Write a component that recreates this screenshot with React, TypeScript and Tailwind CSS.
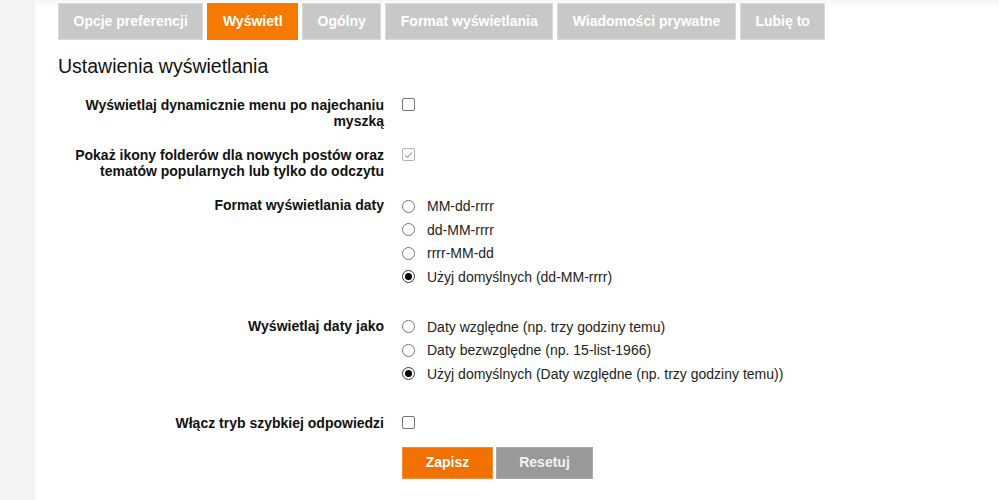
import { ReactNode } from "react";

const tabs = [
    { name: "Opcje preferencji", active: false },
    { name: "Wyświetl", active: true },
    { name: "Ogólny", active: false },
    { name: "Format wyświetlania", active: false },
    { name: "Wiadomości prywatne", active: false },
    { name: "Lubię to", active: false },
];

function Checkbox({ checked }: { checked?: boolean }) {
    if (checked) {
        return (
            <span className="mt-[1px] flex h-[13px] w-[13px] items-center justify-center rounded-[2px] border border-[#b4b4b4] bg-white">
                <svg width="9" height="8" viewBox="0 0 9 8" fill="none">
                    <path d="M1 4.2 L3.4 6.4 L8 1.4" stroke="#9aa7bd" strokeWidth="1.1" />
                </svg>
            </span>
        );
    }
    return <span className="mt-[1px] block h-[13px] w-[13px] rounded-[2px] border border-[#767676] bg-white" />;
}

function Radio({ checked }: { checked?: boolean }) {
    return (
        <span className={"flex h-[13px] w-[13px] items-center justify-center rounded-full border bg-white " + (checked ? "border-[#3a3a3a]" : "border-[#767676]")}>
            {checked && <span className="block h-[7px] w-[7px] rounded-full bg-black" />}
        </span>
    );
}

function Row({ label, children }: { label: string; children: ReactNode }) {
    return (
        <div className="flex items-start">
            <div className="w-[326px] text-right text-[14px] font-bold leading-[16px] text-[#111]">{label}</div>
            <div className="ml-[18px]">{children}</div>
        </div>
    );
}

function Options({ items, selected }: { items: string[]; selected: number }) {
    return (
        <div className="flex flex-col gap-[7.5px] pt-[1px] pb-[15px]">
            {items.map((item, i) => (
                <div key={item} className="flex h-[16px] items-center">
                    <Radio checked={i === selected} />
                    <span className="ml-[12px] text-[14px] leading-[16px] text-[#222]">{item}</span>
                </div>
            ))}
        </div>
    );
}

export default function App() {
    return (
        <div className="flex min-h-[500px] font-['Liberation_Sans',Arial,sans-serif]">
            <div className="w-[35px] shrink-0 bg-[#f3f3f3]" />
            <main className="flex-1 bg-white pl-[23px] shadow-[inset_0_8px_8px_-8px_rgba(0,0,0,0.08)]">
                <nav className="flex gap-[4px] pt-[3px]">
                    {tabs.map(tab => (
                        <div
                            key={tab.name}
                            className={"flex h-[37px] items-center border px-[14.5px] text-[14px] font-bold text-white " +
                                (tab.active ? "border-[#f77a00] bg-[#f77a00]" : "border-[#d9d9d9] bg-[#c8c8c8]")}
                        >
                            {tab.name}
                        </div>
                    ))}
                </nav>

                <h1 className="mt-[14px] text-[19.5px] leading-[24px] text-[#111]">Ustawienia wyświetlania</h1>

                <div className="mt-[19px] flex flex-col gap-[18px]">
                    <Row label="Wyświetlaj dynamicznie menu po najechaniu myszką">
                        <Checkbox />
                    </Row>
                    <Row label="Pokaż ikony folderów dla nowych postów oraz tematów popularnych lub tylko do odczytu">
                        <Checkbox checked />
                    </Row>
                    <Row label="Format wyświetlania daty">
                        <Options items={["MM-dd-rrrr", "dd-MM-rrrr", "rrrr-MM-dd", "Użyj domyślnych (dd-MM-rrrr)"]} selected={3} />
                    </Row>
                    <Row label="Wyświetlaj daty jako">
                        <Options
                            items={["Daty względne (np. trzy godziny temu)", "Daty bezwzględne (np. 15-list-1966)", "Użyj domyślnych (Daty względne (np. trzy godziny temu))"]}
                            selected={2}
                        />
                    </Row>
                    <Row label="Włącz tryb szybkiej odpowiedzi">
                        <Checkbox />
                    </Row>
                    <div className="-mt-[2px] ml-[344px] flex gap-[3px]">
                        <button className="h-[32px] w-[91px] border border-[#f58a3a] bg-[#f07000] text-[14px] font-bold text-white">Zapisz</button>
                        <button className="h-[32px] w-[97px] border border-[#a8a8a8] bg-[#999999] text-[14px] font-bold text-[#f2f2f2]">Resetuj</button>
                    </div>
                </div>
            </main>
        </div>
    );
}
